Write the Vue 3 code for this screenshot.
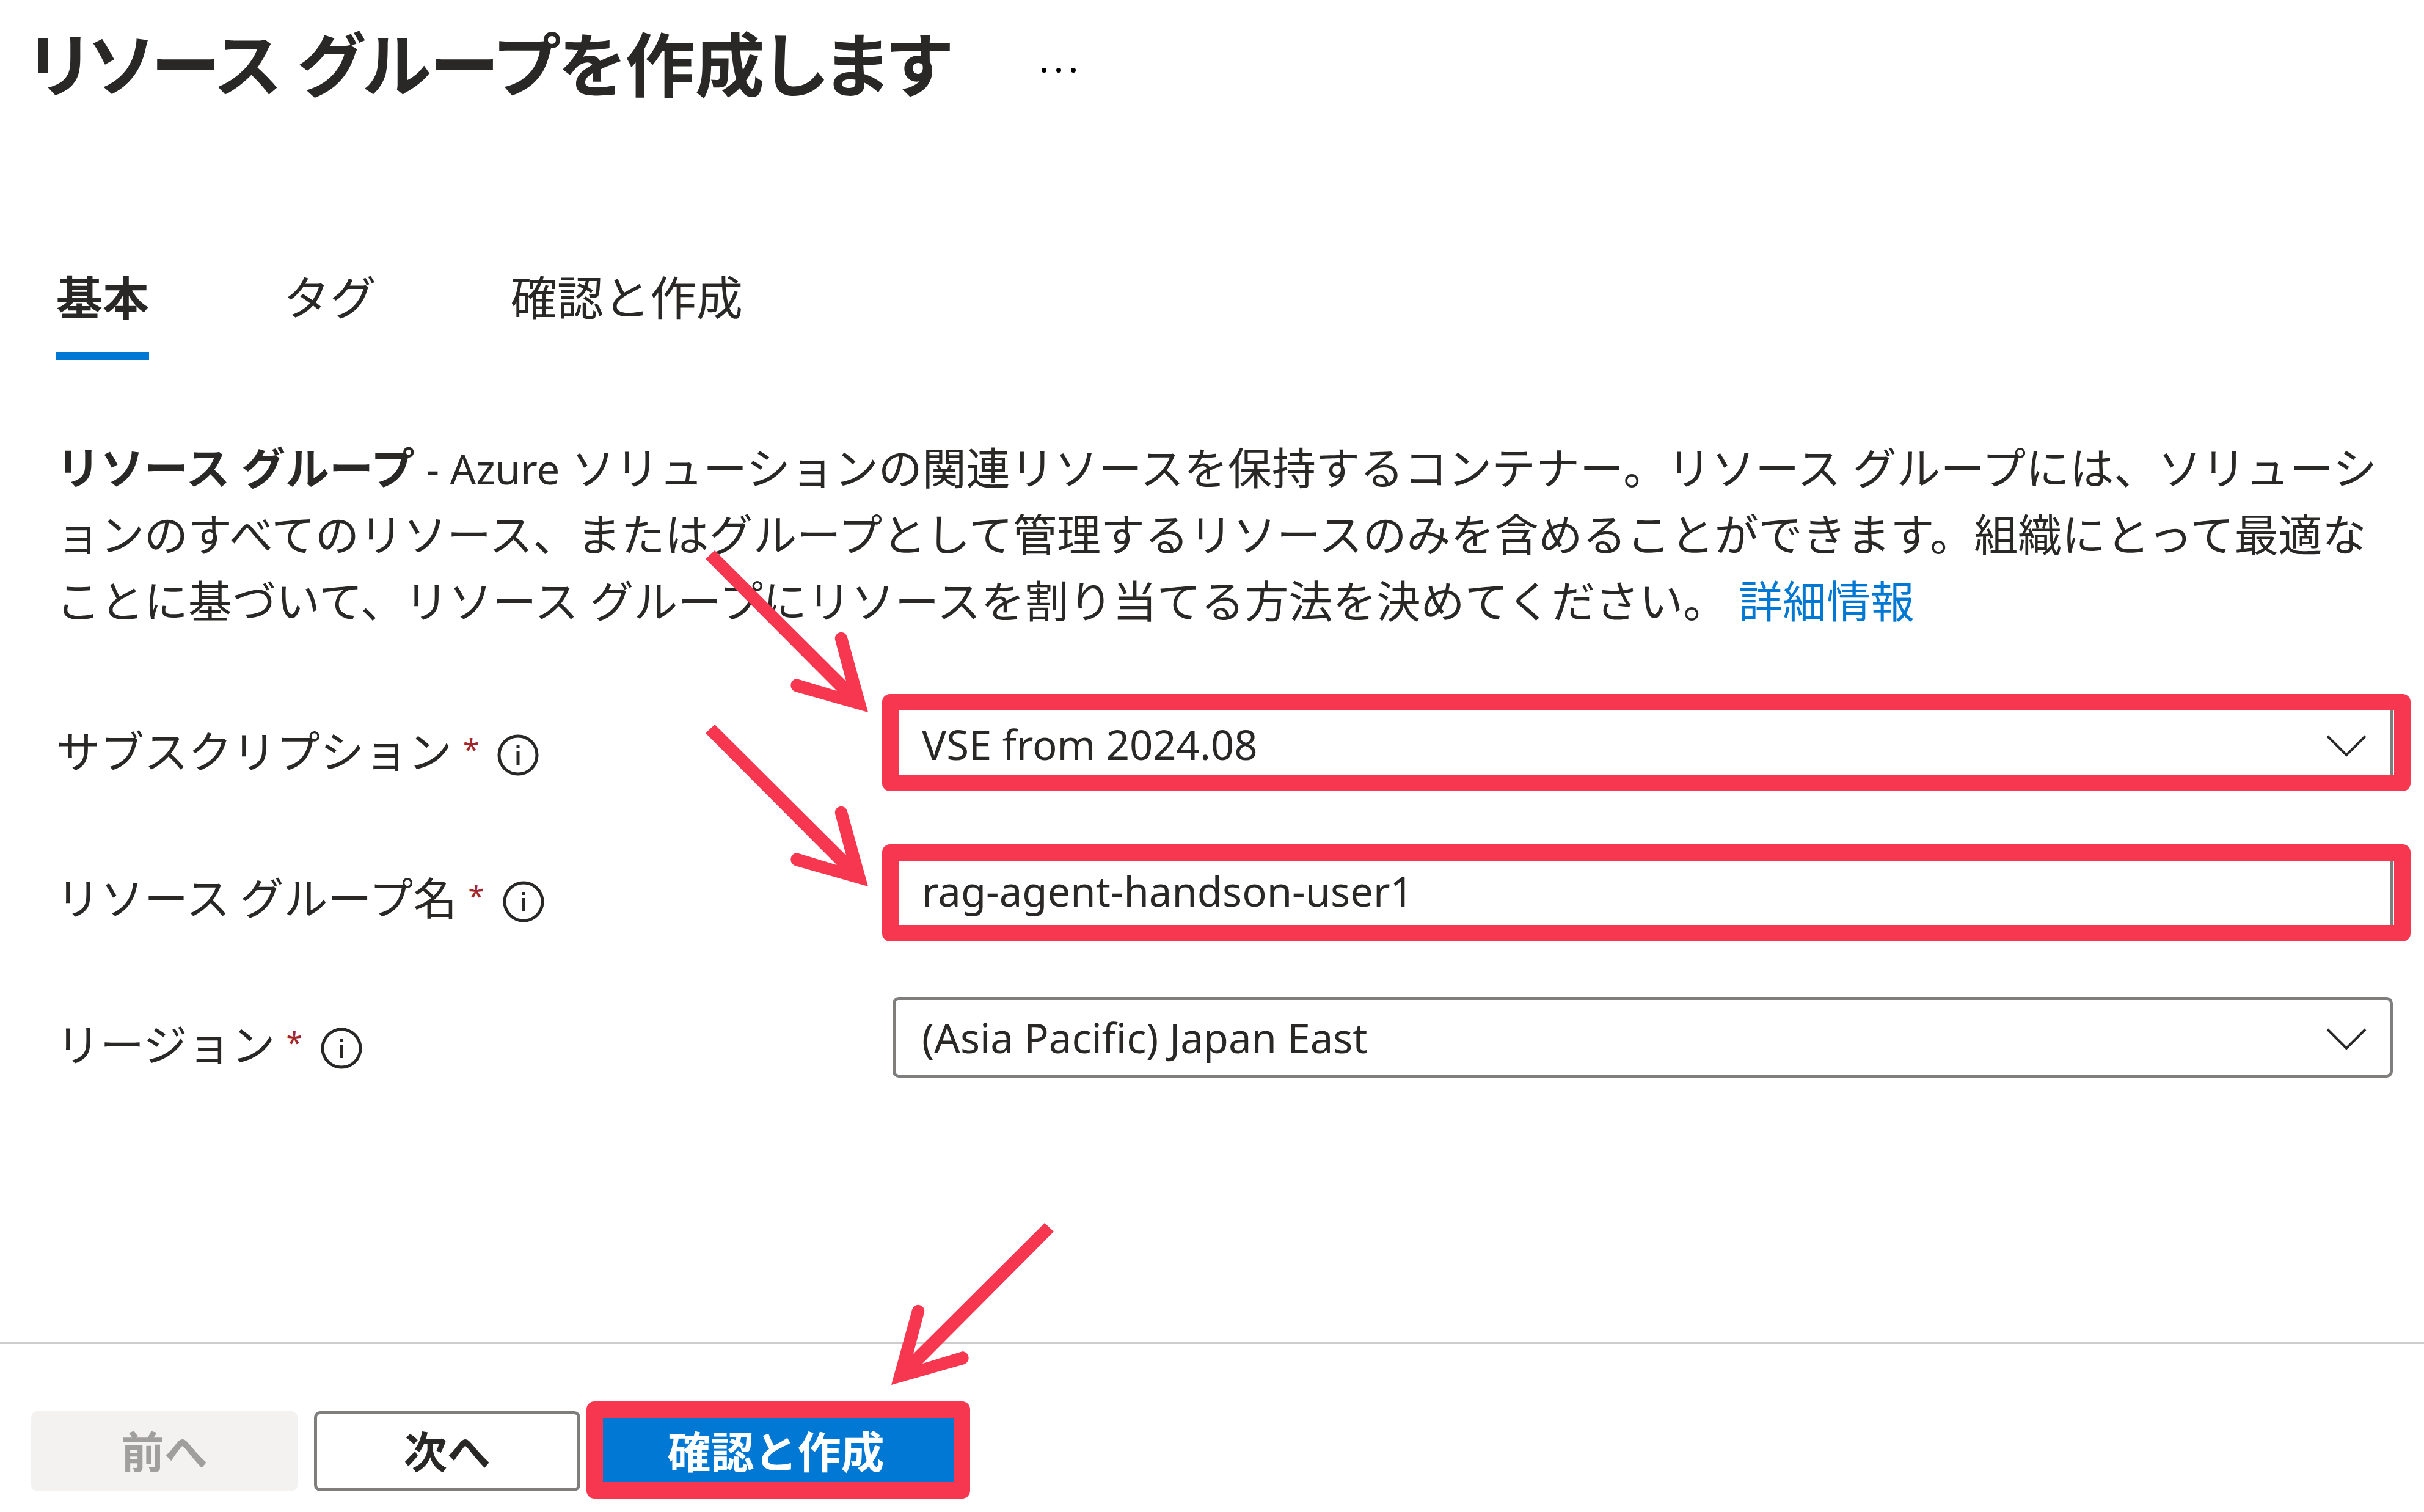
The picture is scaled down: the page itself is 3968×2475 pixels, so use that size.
<script setup>
import { ref } from 'vue'

const tabs = ['基本', 'タグ', '確認と作成']
const activeTab = ref('基本')

const subscription = ref('VSE from 2024.08')
const groupName = ref('rag-agent-handson-user1')
const region = ref('(Asia Pacific) Japan East')

const arrowPath =
  'M20 6 L235 220 L217 152 A10 10 0 0 1 237 148 L271 271 L151 237 A11 11 0 0 1 154 216 L220 236 L5 20 Z'
</script>

<template>
  <main class="page" lang="ja">
    <header class="page-header">
      <h1>リソース グループを作成します</h1>
      <button class="more" type="button" aria-label="その他">
        <svg viewBox="0 0 58 10" width="58" height="10">
          <circle cx="5" cy="5" r="4" />
          <circle cx="29" cy="5" r="4" />
          <circle cx="53" cy="5" r="4" />
        </svg>
      </button>
    </header>

    <div class="content">
      <nav class="tabs" role="tablist">
        <button
          v-for="tab in tabs"
          :key="tab"
          type="button"
          role="tab"
          :aria-selected="tab === activeTab"
          :class="['tab', { active: tab === activeTab }]"
          @click="activeTab = tab"
        >{{ tab }}</button>
      </nav>

      <p class="description">
        <strong>リソース グループ</strong> <span class="latin">- Azure</span> ソリューションの関連リソースを保持するコンテナー。リソース グループには、ソリューションのすべてのリソース、またはグループとして管理するリソースのみを含めることができます。組織にとって最適なことに基づいて、リソース グループにリソースを割り当てる方法を決めてください。
        <a href="#">詳細情報</a>
      </p>

      <form class="form" @submit.prevent>
        <div class="row">
          <div class="label">
            <label for="subscription">サブスクリプション</label>
            <span class="required">*</span>
            <button class="info" type="button" aria-label="サブスクリプションの情報">
              <svg viewBox="0 0 68 68" width="68" height="68">
                <circle cx="34" cy="34" r="31" />
                <path d="M34 18v5M34 28v22" />
              </svg>
            </button>
          </div>
          <div class="field">
            <select id="subscription" v-model="subscription">
              <option>VSE from 2024.08</option>
            </select>
            <svg class="chevron" viewBox="0 0 66 36" width="66" height="36">
              <path d="M2 2L33 33L64 2" />
            </svg>
            <span class="mark mark-upper"></span>
            <svg class="arrow arrow-subscription" viewBox="0 0 280 280" width="280" height="280">
              <path :d="arrowPath" />
            </svg>
          </div>
        </div>

        <div class="row">
          <div class="label">
            <label for="group-name">リソース グループ名</label>
            <span class="required">*</span>
            <button class="info" type="button" aria-label="リソース グループ名の情報">
              <svg viewBox="0 0 68 68" width="68" height="68">
                <circle cx="34" cy="34" r="31" />
                <path d="M34 18v5M34 28v22" />
              </svg>
            </button>
          </div>
          <div class="field">
            <input id="group-name" v-model="groupName" type="text" />
            <span class="mark mark-lower"></span>
            <svg class="arrow arrow-name" viewBox="0 0 280 280" width="280" height="280">
              <path :d="arrowPath" />
            </svg>
          </div>
        </div>

        <div class="row">
          <div class="label">
            <label for="region">リージョン</label>
            <span class="required">*</span>
            <button class="info" type="button" aria-label="リージョンの情報">
              <svg viewBox="0 0 68 68" width="68" height="68">
                <circle cx="34" cy="34" r="31" />
                <path d="M34 18v5M34 28v22" />
              </svg>
            </button>
          </div>
          <div class="field">
            <select id="region" v-model="region">
              <option>(Asia Pacific) Japan East</option>
            </select>
            <svg class="chevron" viewBox="0 0 66 36" width="66" height="36">
              <path d="M2 2L33 33L64 2" />
            </svg>
          </div>
        </div>
      </form>
    </div>

    <footer class="footer">
      <button class="btn" type="button" disabled>前へ</button>
      <button class="btn outlined" type="button">次へ</button>
      <div class="marked">
        <button class="btn primary" type="button">確認と作成</button>
        <span class="mark mark-button"></span>
        <svg class="arrow arrow-button" viewBox="0 0 280 280" width="280" height="280">
          <path :d="arrowPath" transform="matrix(-1 0 0 1 280 0)" />
        </svg>
      </div>
    </footer>
  </main>
</template>

<style>
body {
  margin: 0;
  background: #fff;
}
</style>

<style scoped>
.page {
  color: #292827;
  font-family: "Noto Sans CJK JP", sans-serif;
  font-size: 72px;
  overflow-x: clip;
}

button,
select,
input {
  margin: 0;
  font: inherit;
  color: inherit;
  box-sizing: border-box;
}

button {
  padding: 0;
  border: 0;
  background: none;
}

.page-header {
  display: flex;
  align-items: center;
  gap: 148px;
  padding: 20px 47px 0;
}

h1 {
  margin: 0;
  font-size: 114px;
  line-height: 160px;
  font-weight: 700;
  font-feature-settings: "palt";
}

.more {
  display: flex;
  margin-top: 30px;
  padding: 20px 0;
}

.content {
  padding: 253px 51px 0 92px;
}

.tabs {
  display: flex;
  gap: 220px;
}

.tab {
  padding-bottom: 44px;
  border-bottom: 12px solid transparent;
  font-size: 76px;
  line-height: 100px;
}

.tab.active {
  border-color: #0078d4;
  font-weight: 700;
}

.description {
  margin: 122px 0 0;
  font-family: "Noto Sans", "Noto Sans CJK JP", sans-serif;
  line-height: 109px;
  line-break: anywhere;
}

.latin {
  font-size: 67px;
  line-height: 100px;
}

.description a {
  color: #0078d4;
  text-decoration: none;
}

.form {
  display: grid;
  gap: 108px;
  margin-top: 114px;
}

.row {
  display: grid;
  grid-template-columns: 1369px 1fr;
}

.label {
  display: flex;
  align-items: center;
  padding-top: 16px;
  line-height: 116px;
}

.required {
  margin-left: 18px;
  color: #a4262c;
  font-family: "Noto Sans", sans-serif;
  font-size: 48px;
}

.info {
  display: flex;
  margin: 20px 0 0 30px;
}

.info svg {
  fill: none;
  stroke: #292827;
  stroke-width: 5;
}

.field {
  position: relative;
}

.field select,
.field input {
  display: block;
  width: 100%;
  height: 132px;
  padding: 0 43px;
  border: 5px solid #7f7e7d;
  border-radius: 10px;
  outline: 0;
  appearance: none;
  background: #fff;
  font-family: "Noto Sans", "Noto Sans CJK JP", sans-serif;
  font-size: 67px;
}

.chevron {
  position: absolute;
  top: 51px;
  right: 43px;
  fill: none;
  stroke: #292827;
  stroke-width: 4;
  pointer-events: none;
}

.mark {
  position: absolute;
  border: 27px solid #f6374f;
  border-radius: 13px;
  pointer-events: none;
}

.mark-upper {
  inset: -16px -29px -11px -17px;
}

.mark-lower {
  inset: -10px -29px -17px -17px;
}

.mark-button {
  inset: -16px -25px -12px -17px;
}

.arrow {
  position: absolute;
  fill: #f6374f;
  pointer-events: none;
}

.arrow-subscription {
  top: -257px;
  left: -311px;
}

.arrow-name {
  top: -212px;
  left: -311px;
}

.arrow-button {
  top: -314px;
  left: 473px;
}

.footer {
  display: flex;
  gap: 27px;
  margin-top: 432px;
  padding: 110px 51px 34px;
  border-top: 4px solid #cdcdcd;
}

.btn {
  width: 436px;
  height: 131px;
  padding-bottom: 8px;
  border-radius: 10px;
  font-size: 71px;
  font-weight: 700;
  line-height: 112px;
}

.btn:disabled {
  background: #f3f2f1;
  color: #a19f9d;
}

.btn.outlined {
  border: 5px solid #7f7e7d;
}

.btn.primary {
  display: block;
  width: 586px;
  background: #0078d4;
  color: #fff;
}

.marked {
  position: relative;
}
</style>
